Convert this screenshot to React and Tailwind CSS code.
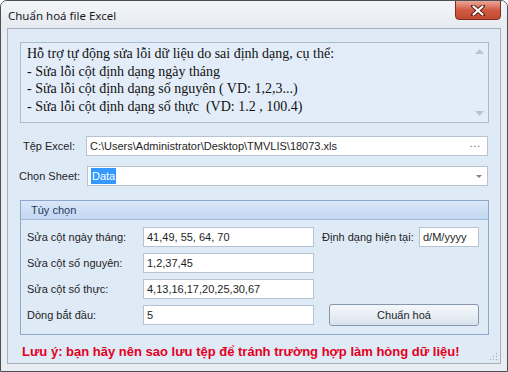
import React from "react";

const ui = { fontFamily: '"Liberation Sans", Arial, sans-serif' };

function Input({ className = "", children }) {
  return (
    <div
      className={`h-[20px] bg-white border border-[#b7c3d3] flex items-center pl-[3px] text-[11px] text-[#1e1e1e] ${className}`}
    >
      {children}
    </div>
  );
}

function Row({ label, value, children }) {
  return (
    <div className="flex items-center h-[20px]">
      <div className="w-[116px] text-[11px] text-[#1e1e1e]">{label}</div>
      <Input className="w-[171px]">{value}</Input>
      {children}
    </div>
  );
}

export default function App() {
  return (
    <div
      className="w-[508px] h-[372px] border border-[#4a5058] rounded-t-[7px] bg-[#e9edf2] flex flex-col overflow-hidden"
      style={ui}
    >
      {/* Title bar */}
      <div className="h-[27px] flex items-start bg-gradient-to-b from-[#f3f5f8] to-[#e6ebf1] relative">
        <div
          className="mt-[6px] ml-[7px] text-[11.5px] text-[#1a1a1a]"
          style={{ fontFamily: '"Noto Sans", "Open Sans", sans-serif' }}
        >
          Chuẩn hoá file Excel
        </div>
        <div className="absolute right-[6px] top-[-1px] w-[46px] h-[20px] rounded-b-[4px] border border-[#7c2c20] bg-gradient-to-b from-[#e9a797] via-[#d25a44] to-[#c04a30] flex items-center justify-center">
          <svg width="14" height="11" viewBox="0 0 14 11">
            <path d="M2 1 L12 10 M12 1 L2 10" stroke="#5a1d12" strokeWidth="4" strokeLinecap="round" />
            <path d="M2.5 1.5 L11.5 9.5 M11.5 1.5 L2.5 9.5" stroke="#ffffff" strokeWidth="2.2" strokeLinecap="round" />
          </svg>
        </div>
      </div>

      {/* Client */}
      <div className="mx-[6px] h-[336px] border border-[#a7b0bc] bg-[#dfeaf7] flex flex-col relative">
        {/* Memo */}
        <div className="mt-[13px] ml-[12px] w-[469px] h-[81px] border border-[#a9bbd2] bg-[#e3edf9] flex">
          <div
            className="flex-1 pl-[6px] pt-[2px] text-[14px] leading-[17.5px] text-[#111]"
            style={{ fontFamily: '"Liberation Serif", "Times New Roman", serif' }}
          >
            <div>Hỗ trợ tự động sửa lỗi dữ liệu do sai định dạng, cụ thể:</div>
            <div>- Sửa lỗi cột định dạng ngày tháng</div>
            <div>- Sửa lỗi cột định dạng số nguyên ( VD: 1,2,3...)</div>
            <div>- Sửa lỗi cột định dạng số thực&nbsp; (VD: 1.2 , 100.4)</div>
          </div>
          <div className="w-[17px] flex flex-col items-center justify-between py-[6px]">
            <svg width="9" height="5" viewBox="0 0 9 5">
              <path d="M0 5 L4.5 0 L9 5 Z" fill="#b9c5d4" />
            </svg>
            <svg width="9" height="5" viewBox="0 0 9 5">
              <path d="M0 0 L4.5 5 L9 0 Z" fill="#b9c5d4" />
            </svg>
          </div>
        </div>

        {/* Tệp Excel */}
        <div className="mt-[13px] flex items-center h-[20px]">
          <div className="ml-[15px] w-[63px] text-[11px] text-[#1e1e1e]">Tệp Excel:</div>
          <Input className="w-[402px] justify-between pr-[6px]">
            <span>C:\Users\Administrator\Desktop\TMVLIS\18073.xls</span>
            <span className="text-[#555] tracking-[1px] text-[10px] leading-none pb-[4px]">...</span>
          </Input>
        </div>

        {/* Chọn Sheet */}
        <div className="mt-[10px] flex items-center h-[20px]">
          <div className="ml-[11px] w-[68px] text-[11px] text-[#1e1e1e]">Chọn Sheet:</div>
          <Input className="w-[401px] justify-between pr-[5px] pl-[1px]">
            <span className="bg-[#3399ff] text-white px-[1px] leading-[16px]">Data</span>
            <svg width="6" height="3" viewBox="0 0 6 3">
              <path d="M0 0 L3 3 L6 0 Z" fill="#7b8592" />
            </svg>
          </Input>
        </div>

        {/* Group */}
        <div className="mt-[14px] ml-[12px] w-[469px] h-[135px] border border-[#8da8cc] flex flex-col">
          <div className="h-[19px] border-b border-[#a3bbdb] bg-gradient-to-b from-[#dae7f8] to-[#c3d7f0] flex items-center pl-[10px] text-[11px] text-[#1e3a5f]">
            Tùy chọn
          </div>
          <div className="pt-[7px] pl-[6px] flex flex-col gap-[6px]">
            <Row label="Sửa cột ngày tháng:" value="41,49, 55, 64, 70">
              <div className="ml-[8px] w-[97px] text-[11px] text-[#1e1e1e] whitespace-nowrap">Định dạng hiện tại:</div>
              <Input className="w-[60px]">d/M/yyyy</Input>
            </Row>
            <Row label="Sửa cột số nguyên:" value="1,2,37,45" />
            <Row label="Sửa cột số thực:" value="4,13,16,17,20,25,30,67" />
            <Row label="Dòng bắt đầu:" value="5">
              <div className="ml-[15px] w-[150px] h-[22px] rounded-[3px] border border-[#8796aa] bg-gradient-to-b from-[#f4f7fa] via-[#e8eef5] to-[#d9e2ec] flex items-center justify-center text-[11px] text-[#1e1e1e]">
                Chuẩn hoá
              </div>
            </Row>
          </div>
        </div>

        {/* Warning */}
        <div className="mt-[7px] ml-[14px] text-[13px] font-bold text-[#e4001b]">
          Lưu ý: bạn hãy nên sao lưu tệp để tránh trường hợp làm hỏng dữ liệu!
        </div>

        {/* Resize grip */}
        <div className="absolute right-[2px] bottom-[2px]">
          <svg width="8" height="8" viewBox="0 0 8 8">
            <rect x="6" y="0" width="1" height="1" fill="#9aa8b8" />
            <rect x="3" y="3" width="1" height="1" fill="#9aa8b8" />
            <rect x="6" y="3" width="1" height="1" fill="#9aa8b8" />
            <rect x="0" y="6" width="1" height="1" fill="#9aa8b8" />
            <rect x="3" y="6" width="1" height="1" fill="#9aa8b8" />
            <rect x="6" y="6" width="1" height="1" fill="#9aa8b8" />
          </svg>
        </div>
      </div>
    </div>
  );
}
